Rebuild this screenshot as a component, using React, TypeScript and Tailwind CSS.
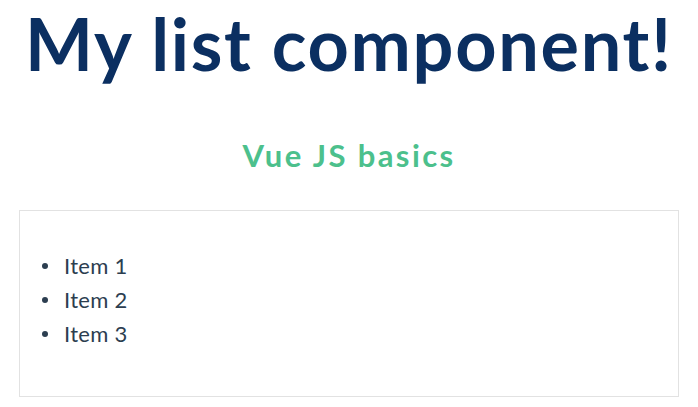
import React from "react";

const items = ["Item 1", "Item 2", "Item 3"];

const App = () => {
  return (
    <div className="w-[698px] h-[407px] bg-white overflow-hidden font-['Lato','Noto_Sans',sans-serif]">
      <h1 className="text-center text-[72px] leading-[86px] font-bold tracking-[1.7px] text-[#0b2f61]">
        My list component!
      </h1>
      <h2 className="mt-[52px] text-center text-[31px] leading-[34px] font-bold tracking-[2.4px] text-[#4cc08c]">
        Vue JS basics
      </h2>
      <div className="mx-[19px] mt-[38px] h-[187px] border border-[#e2e2e2] pt-[38px] pl-[22px]">
        <ul className="text-[22px] leading-[34px] tracking-[0.3px] text-[#2c3e50]">
          {items.map((item) => (
            <li key={item} className="flex items-center">
              <span className="w-[6px] h-[6px] rounded-full bg-[#2c3e50] mr-[16px]" />
              {item}
            </li>
          ))}
        </ul>
      </div>
    </div>
  );
};

export default App;
